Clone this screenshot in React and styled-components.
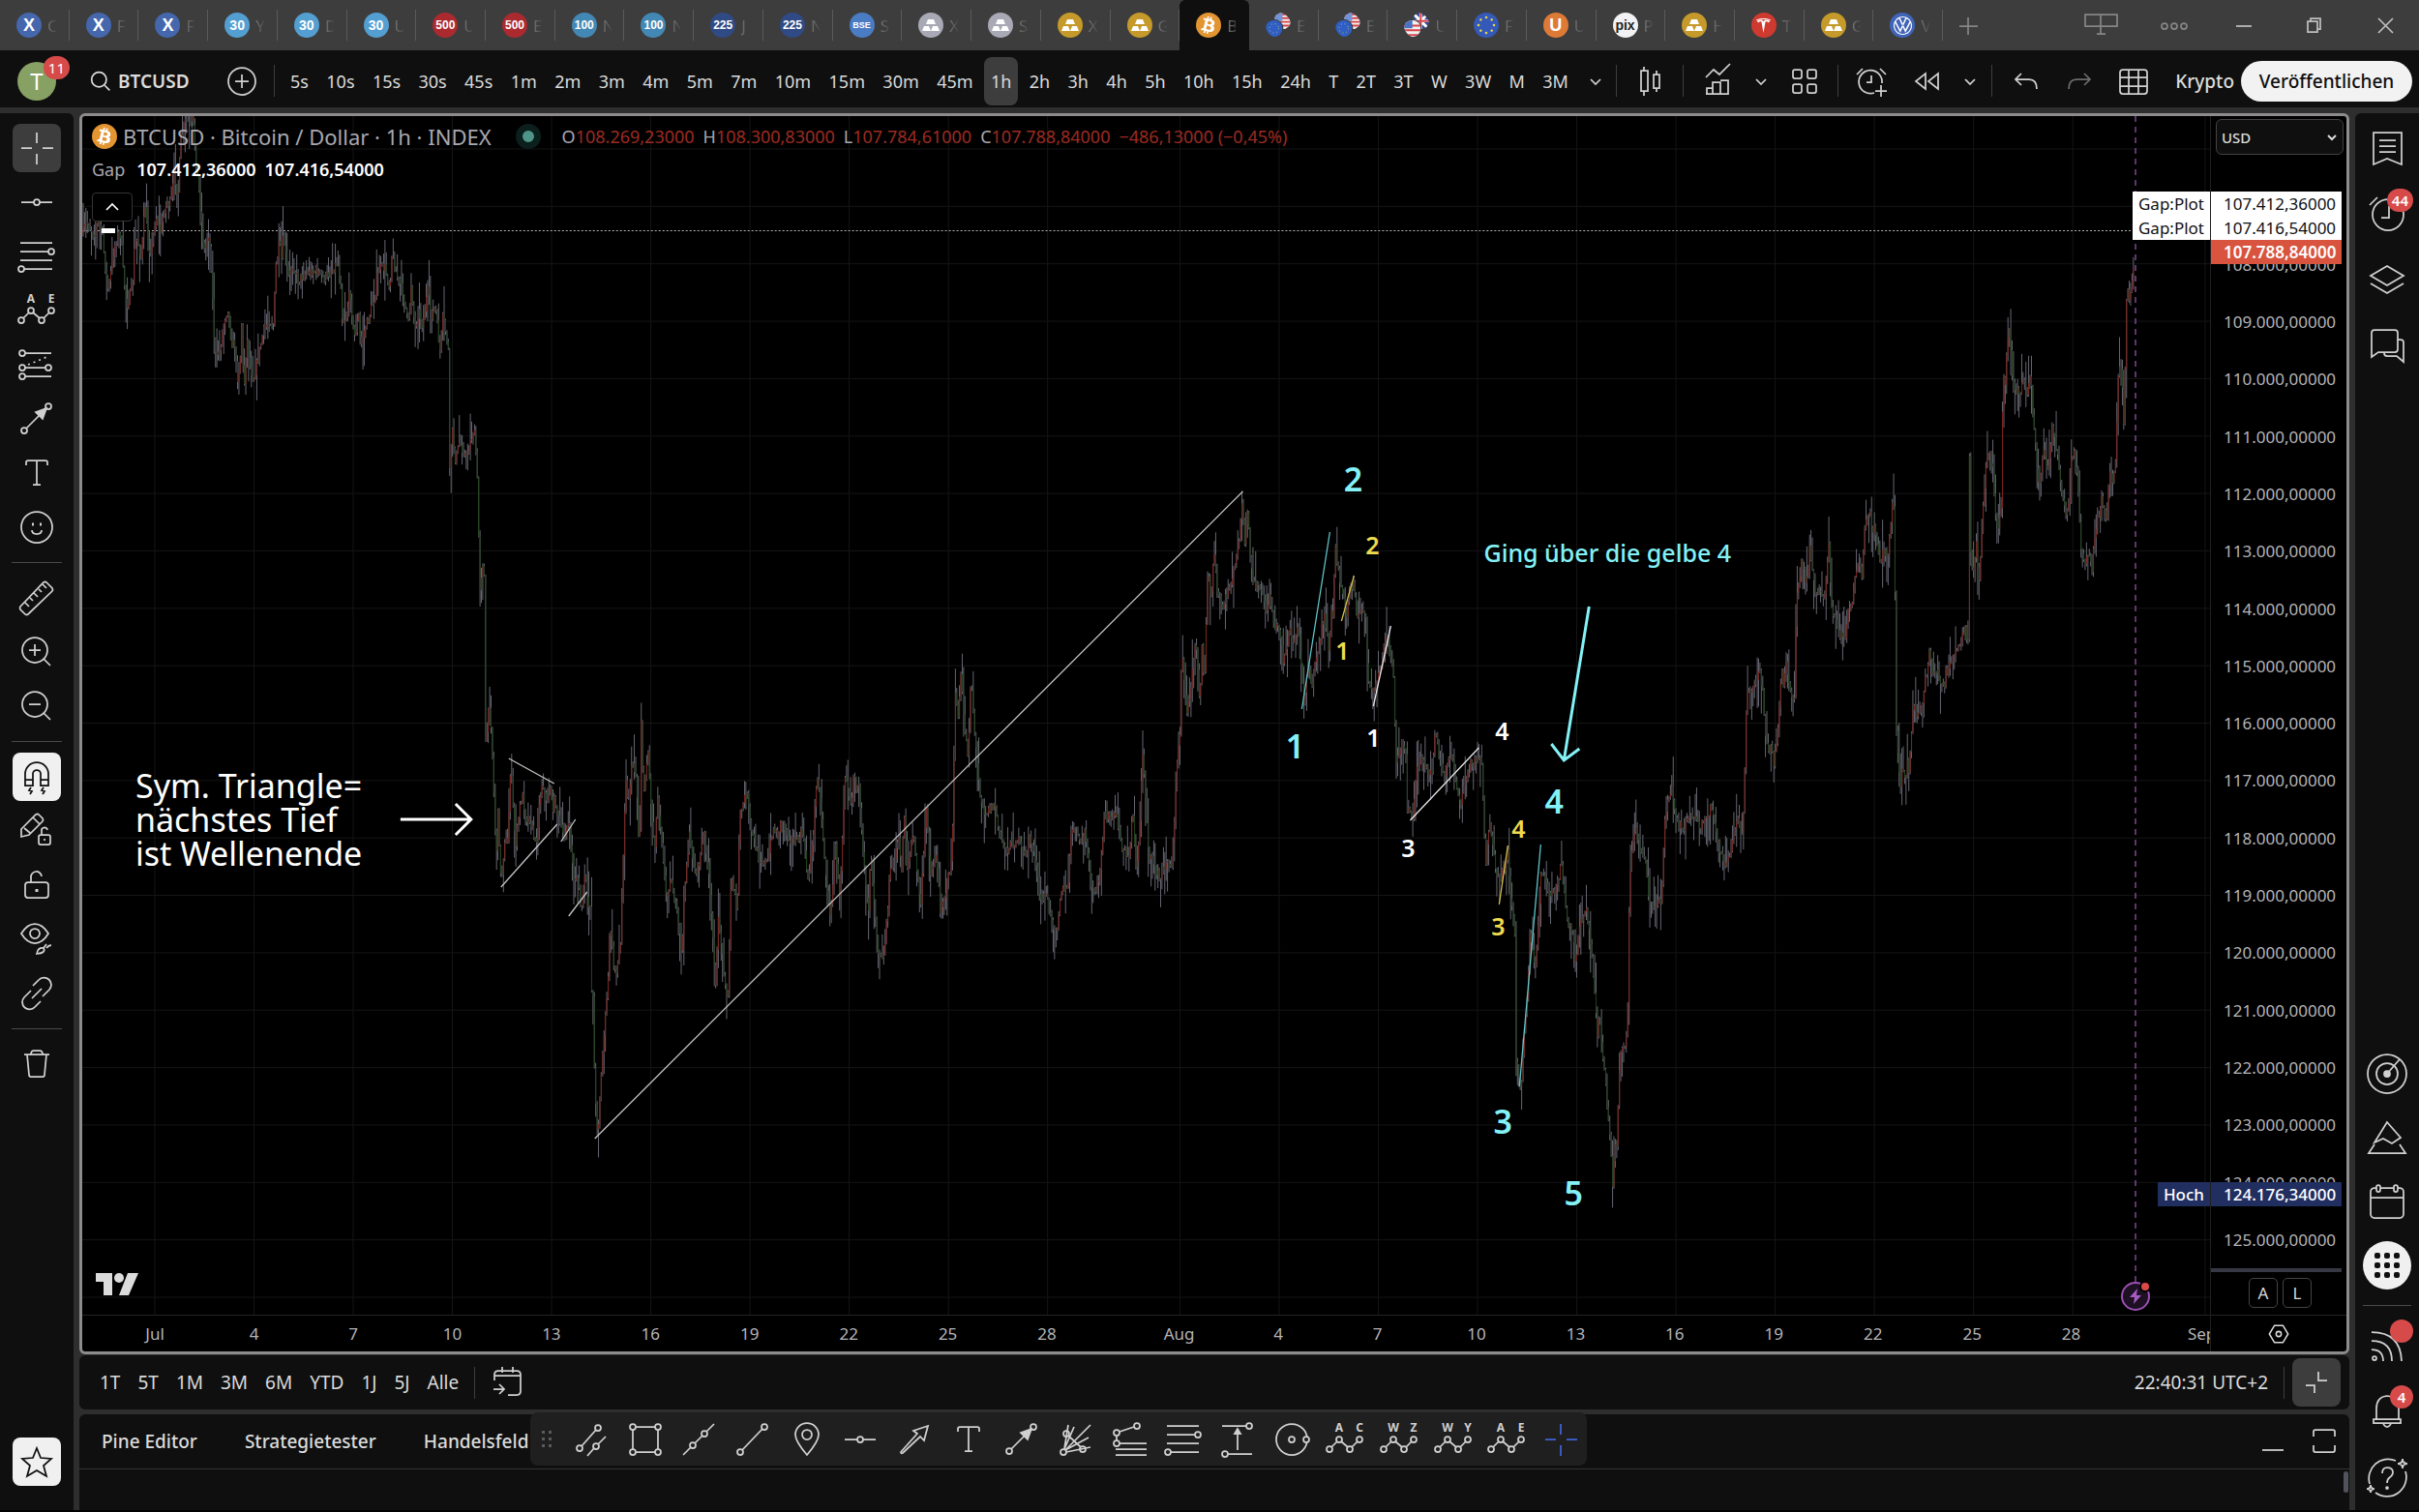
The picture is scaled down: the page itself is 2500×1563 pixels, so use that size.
import React from "react";
import styled, { createGlobalStyle, css } from "styled-components";
import { FaBtc } from "react-icons/fa";
import { SiTesla, SiVolkswagen } from "react-icons/si";

const GlobalStyle = createGlobalStyle`
  * {
    box-sizing: border-box;
  }
  body {
    margin: 0;
    background: #000;
    color: #dbdbdb;
    font-family: "Noto Sans", "Open Sans", sans-serif;
    font-size: 17px;
  }
  button, select {
    font: inherit;
    color: inherit;
    border: 0;
    padding: 0;
    background: none;
    cursor: pointer;
  }
  svg {
    display: block;
    flex-shrink: 0;
  }
`;

/* ---------- page ---------- */

const Page = styled.div`
  min-height: 100vh;
  display: flex;
  flex-direction: column;
  background: #2e2e2e;
  border-bottom: 2px solid #000;
`;

const Body = styled.div`
  flex: 1;
  display: flex;
  gap: 6px;
  margin-top: 6px;
`;

const Center = styled.main`
  flex: 1;
  min-width: 0;
  display: flex;
  flex-direction: column;
`;

/* ---------- window tabs ---------- */

const TabBar = styled.header`
  display: flex;
  height: 52px;
  background: #3d3d3d;
`;

const TabList = styled.nav`
  flex: 1;
  display: flex;
`;

const Tab = styled.button`
  flex: 1 1 0;
  min-width: 0;
  display: flex;
  align-items: center;
  gap: 6px;
  padding-left: 17px;
  position: relative;
  overflow: hidden;
  ${(p) =>
    p.$active
      ? css`
          background: #0f0f0f;
          border-radius: 6px 6px 0 0;
        `
      : css`
          &::after {
            content: "";
            position: absolute;
            right: 0;
            top: 10px;
            width: 1px;
            height: 32px;
            background: #5a5a5a;
          }
        `}
`;

const TabLetter = styled.span`
  width: 9px;
  overflow: hidden;
  text-align: left;
  color: transparent;
  background: linear-gradient(90deg, #767676, #474747);
  background-clip: text;
`;

const Coin = styled.span`
  flex: none;
  width: 26px;
  height: 26px;
  border-radius: 50%;
  display: flex;
  align-items: center;
  justify-content: center;
  overflow: hidden;
  background: ${(p) => p.$bg};
  color: ${(p) => p.$color || "#fff"};
  font-family: "Liberation Sans", sans-serif;
  font-weight: 700;
  font-size: ${(p) => p.$size || 12}px;
`;

const WindowActions = styled.div`
  width: 492px;
  display: flex;
  align-items: center;
  justify-content: flex-end;
`;

const WindowButton = styled.button`
  width: ${(p) => p.$w || 73}px;
  height: 52px;
  display: flex;
  align-items: center;
  justify-content: center;
  color: ${(p) => (p.$dim ? "#858585" : "#bdbdbd")};
`;

/* ---------- top toolbar ---------- */

const Toolbar = styled.div`
  height: 59px;
  display: flex;
  align-items: center;
  padding-top: 4px;
  background: #0f0f0f;
`;

const Avatar = styled.button`
  position: relative;
  width: 40px;
  height: 40px;
  margin-left: 18px;
  border-radius: 50%;
  background: #87a064;
  color: #fff;
  font-size: 24px;
`;

const Badge = styled.span`
  position: absolute;
  top: ${(p) => p.$top || 0}px;
  right: ${(p) => p.$right || 0}px;
  min-width: 24px;
  height: 24px;
  padding: 0 5px;
  border-radius: 12px;
  background: #d64a4a;
  color: #fff;
  font-size: 15px;
  font-weight: ${(p) => p.$weight || 600};
  line-height: 24px;
  text-align: center;
`;

const SymbolButton = styled.button`
  display: flex;
  align-items: center;
  gap: 7px;
  margin-left: 35px;
  width: 124px;
  font-size: 19px;
  font-weight: 600;
`;

const Intervals = styled.div`
  display: flex;
  align-items: center;
  justify-content: space-between;
  width: 1335px;
  margin-left: 9px;
`;

const Interval = styled.button`
  height: 50px;
  padding: 0 7px;
  border-radius: 8px;
  font-size: 18px;
  background: ${(p) => (p.$active ? "#3d3d3d" : "none")};
`;

const Rule = styled.span`
  flex: none;
  width: 1px;
  height: 33px;
  background: #3d3d3d;
`;

const Tool = styled.button`
  position: relative;
  flex: none;
  width: ${(p) => p.$w || 50}px;
  height: 50px;
  display: flex;
  align-items: center;
  justify-content: center;
  border-radius: ${(p) => (p.$round ? 25 : 8)}px;
  color: ${(p) => (p.$solid ? "#0f0f0f" : p.$dim ? "#6b6b6b" : p.$blue ? "#3f63d8" : "#d0d0d0")};
  background: ${(p) => (p.$solid ? "#f0f0f0" : p.$active ? "#3d3d3d" : "none")};
`;

const ToolbarEnd = styled.div`
  flex: 1;
  display: flex;
  align-items: center;
  justify-content: flex-end;
  padding-right: 7px;
`;

const LayoutName = styled.button`
  margin: 0 7px 0 16px;
  font-size: 19px;
  font-weight: 500;
`;

const Publish = styled.button`
  height: 42px;
  width: 177px;
  border-radius: 21px;
  background: #f2f2f2;
  color: #0f0f0f;
  font-size: 19px;
  font-weight: 500;
`;

/* ---------- side bars ---------- */

const LeftBar = styled.aside`
  width: 76px;
  display: flex;
  flex-direction: column;
  align-items: center;
  gap: 6px;
  padding: 11px 0 25px;
  border-radius: 0 6px 0 0;
  background: #0f0f0f;
`;

const Divider = styled.hr`
  width: 52px;
  height: 1px;
  margin: 5px 0;
  border: 0;
  background: #4a4a4a;
`;

const Push = styled.div`
  flex: 1;
`;

const RightBar = styled.aside`
  width: 66px;
  display: flex;
  flex-direction: column;
  align-items: center;
  gap: 16px;
  padding: 11px 0 9px;
  border-radius: 6px 0 0 0;
  background: #0f0f0f;

  ${Divider} {
    width: 50px;
    margin: 0;
  }
`;

const ToolGroup = styled.div`
  display: flex;
  flex-direction: column;
  gap: 18px;
`;

/* ---------- chart ---------- */

const Frame = styled.section`
  flex: 1;
  display: flex;
  flex-direction: column;
  border: 3px solid #8d8b8c;
  border-radius: 6px;
  background: #000;
  overflow: hidden;
`;

const PlotRow = styled.div`
  flex: 1;
  display: flex;
  position: relative;
`;

const Plot = styled.div`
  flex: 1;
  position: relative;
  overflow: hidden;
`;

const Drawing = styled.svg`
  position: absolute;
  inset: 0;
  width: 100%;
  height: 100%;
`;

const Note = styled.div`
  position: absolute;
  left: ${(p) => p.$x}%;
  top: ${(p) => p.$y}%;
  transform: translate(${(p) => (p.$left ? "0" : "-50%")}, -50%);
  color: ${(p) => p.$color};
  font-size: ${(p) => p.$size}px;
  font-weight: ${(p) => p.$weight || 600};
  line-height: 35px;
  white-space: pre;
`;

const Legend = styled.div`
  position: absolute;
  left: 10px;
  top: 6px;
  display: flex;
  flex-direction: column;
  align-items: flex-start;
  color: #a8a8b0;
  white-space: nowrap;
`;

const LegendRow = styled.div`
  display: flex;
  align-items: center;
  height: ${(p) => p.$h}px;
  font-size: 18px;
`;

const LegendTitle = styled.span`
  margin-left: 6px;
  font-size: 22px;
`;

const StatusDot = styled.span`
  width: 26px;
  height: 26px;
  margin: 0 22px 0 25px;
  border: 7px solid #0b1f1c;
  border-radius: 50%;
  background: #4f9488;
`;

const Ohlc = styled.span`
  margin-right: 9px;
  em {
    font-style: normal;
    color: #9c2b22;
  }
`;

const GapValue = styled.strong`
  margin-left: ${(p) => p.$gap}px;
  color: #fff;
  font-weight: 600;
`;

const Collapse = styled.button`
  width: 42px;
  height: 30px;
  margin-top: 5px;
  border: 1px solid #333;
  border-radius: 4px;
  background: #000;
  display: flex;
  align-items: center;
  justify-content: center;
  color: #fff;
`;

const LogoMark = styled.svg`
  position: absolute;
  left: 13px;
  bottom: 19px;
`;

const EventDot = styled.div`
  position: absolute;
  left: 96.5%;
  bottom: 3px;
  transform: translateX(-50%);
`;

const PriceAxis = styled.div`
  width: 141px;
  display: flex;
  flex-direction: column;
  border-left: 1px solid #202020;
  color: #b4b4b8;
`;

const AxisHead = styled.div`
  flex: 120 1 0;
  padding: 3px 3px 0 5px;
`;

const UnitField = styled.div`
  position: relative;
  color: #dbdbdb;
  svg {
    position: absolute;
    right: 7px;
    top: 15px;
    pointer-events: none;
  }
`;

const UnitSelect = styled.select`
  appearance: none;
  width: 100%;
  height: 37px;
  padding-left: 5px;
  border: 1px solid #434343;
  border-radius: 6px;
  background: #0f0f0f;
  font-size: 15px;
  font-weight: 500;
`;

const PriceLabel = styled.div`
  flex: 59 1 0;
  display: flex;
  align-items: center;
  padding-left: 13px;
`;

const AxisFoot = styled.div`
  height: 48px;
  margin-right: 5px;
  border-top: 4px solid #363843;
  display: flex;
  align-items: center;
  justify-content: center;
  gap: 5px;
  padding-left: 8px;
`;

const ScaleButton = styled.button`
  width: 30px;
  height: 31px;
  border: 1px solid #444;
  border-radius: 5px;
  color: #dbdbdb;
`;

const Tags = styled.div`
  position: absolute;
  right: 5px;
  top: ${(p) => p.$y}%;
  display: flex;
  flex-direction: column;
  align-items: flex-end;
`;

const Tag = styled.div`
  display: flex;
  gap: 1px;
  height: 25px;
  line-height: 25px;
  font-weight: ${(p) => p.$weight || 400};
  color: ${(p) => p.$color};
  span {
    padding: 0 6px;
    background: ${(p) => p.$bg};
  }
  b {
    width: 135px;
    padding-left: 13px;
    font-weight: inherit;
    background: ${(p) => p.$bg};
  }
`;

const TimeRow = styled.div`
  height: 38px;
  display: flex;
  border-top: 1px solid #232323;
`;

const TimeAxis = styled.div`
  flex: 1;
  min-width: 0;
  display: flex;
  overflow: hidden;
  color: #b4b4b8;
`;

const TimeLabel = styled.div`
  flex: ${(p) => p.$days} 1 0;
  min-width: 0;
  line-height: 38px;
  text-align: ${(p) => (p.$cut ? "left" : "center")};
  text-indent: ${(p) => (p.$cut ? 35 : 0)}px;
`;

const AxisSettings = styled.button`
  width: 141px;
  border-left: 1px solid #202020;
  display: flex;
  align-items: center;
  justify-content: center;
`;

/* ---------- below the chart ---------- */

const RangeBar = styled.div`
  height: 56px;
  margin-top: 1px;
  display: flex;
  align-items: center;
  padding: 0 9px 0 12px;
  border-radius: 6px;
  background: #0f0f0f;
  font-size: 19px;
`;

const RangeList = styled.div`
  display: flex;
  padding-right: 7px;
`;

const RangeButton = styled.button`
  padding: 0 9px;
  height: 40px;
`;

const Clock = styled.button`
  margin: 0 16px 0 auto;
`;

const ShrinkSlot = styled.div`
  margin-left: 8px;
`;

const Panel = styled.section`
  position: relative;
  height: 99px;
  margin-top: 5px;
  border-radius: 6px 6px 0 0;
  background: #0f0f0f;
`;

const PanelTabs = styled.div`
  height: 57px;
  display: flex;
  align-items: center;
  gap: 49px;
  padding: 0 1px 0 23px;
  border-bottom: 1px solid #333;
`;

const PanelTab = styled.button`
  font-size: 19px;
  font-weight: 500;
`;

const PanelActions = styled.div`
  margin-left: auto;
  display: flex;
`;

const ScrollThumb = styled.div`
  width: 5px;
  height: 22px;
  margin: 2px 1px 0 auto;
  border-radius: 3px;
  background: #50535e;
`;

const FloatingBar = styled.div`
  position: absolute;
  left: 466px;
  top: -2px;
  width: 1092px;
  height: 55px;
  display: flex;
  align-items: center;
  padding: 0 2px 0 9px;
  border-radius: 8px;
  background: #1f1f1f;
`;

const FloatingTools = styled.div`
  flex: 1;
  display: flex;
  justify-content: space-between;
  margin-left: 13px;
`;

/* ---------- icons ---------- */

const dot = (x, y, r = 3) => <circle cx={x} cy={y} r={r} />;

const wave = (a, b) => (
  <>
    {dot(9, 35)}
    {dot(19, 25)}
    {dot(30, 35)}
    {dot(40, 25)}
    <path d="M11 33l6-6M21 27l7 6M32 33l6-6" />
    <g fill="currentColor" stroke="none" fontSize="12" fontWeight="700" textAnchor="middle">
      <text x="19" y="17">{a}</text>
      <text x="40" y="17">{b}</text>
    </g>
  </>
);

const icons = {
  cross: <path d="M25 9v11M25 31v11M9 25h11M31 25h11" />,
  hline: <>{dot(25, 25)}<path d="M9 25h13M28 25h13" /></>,
  fib: <>{dot(40, 20)}{dot(9, 38)}<path d="M8 11h33M8 20h29M8 29h33M12 38h29" /></>,
  abcde: wave("A", "E"),
  abc: wave("A", "C"),
  wxyxz: wave("W", "Z"),
  wxy: wave("W", "Y"),
  position: (
    <>
      {dot(10, 13)}{dot(10, 28)}{dot(37, 28)}{dot(10, 37)}
      <path d="M13 13h27M13 28h21M13 37h27" />
      <path d="M16 25l22-9" strokeDasharray="2 4" />
    </>
  ),
  arrow: <>{dot(12, 37)}{dot(37, 12)}<path d="M14 35L30 19" /><path d="M35 14L24 18l7 7z" fill="currentColor" /></>,
  text: <path d="M14 17v-3q0-2 2-2h18q2 0 2 2v3M25 12v25M21 37h8" />,
  smile: (
    <>
      {dot(25, 25, 16)}
      <path d="M20 28q0 4 5 4t5-4" />
      <path d="M20 22h2M28 22h2" strokeWidth="3" />
    </>
  ),
  ruler: <path d="M8 34L32 9q2-1 3 0l6 6q1 2 0 3L16 42q-2 1-3 0l-5-5q-1-2 0-3zM13 30l4 4M18 25l3 3M22 20l4 4M27 16l3 3M31 11l4 4" />,
  zoomIn: <>{dot(23, 23, 13)}<path d="M32 32l7 7M17 23h12M23 17v12" /></>,
  zoomOut: <>{dot(23, 23, 13)}<path d="M32 32l7 7M17 23h12" /></>,
  magnet: <path d="M13 34V22a12 12 0 0 1 24 0v12h-8V22a4 4 0 0 0-8 0v12zM13 28h8M29 28h8M19 36l-2 3 3 1-2 3M32 36l-2 3 3 1-2 3" />,
  pencilLock: (
    <>
      <path d="M9 23L24 8q2-1 3 0l4 4q1 2 0 3L17 29l-8 2zM21 11l7 7M12 22l6 5" />
      <rect x="27" y="29" width="12" height="10" rx="2" />
      <path d="M30 29v-4a3 3 0 0 1 6-1M33 33v2" />
    </>
  ),
  lock: <><rect x="13" y="22" width="24" height="16" rx="3" /><path d="M19 22v-5a5 5 0 0 1 11-1" /><path d="M25 29v3" strokeWidth="3" /></>,
  eye: (
    <>
      <path d="M9 19q6-10 14-10t14 10q-6 10-14 10T9 19z" />
      {dot(23, 19, 5)}
      <path d="M25 40q1-7 7-6 3 5-7 6zM32 34l3-4M35 34q2-3 5-3" />
    </>
  ),
  link: <path d="M21 17l6-6a7 7 0 0 1 11 10l-7 7M29 33l-6 6a7 7 0 0 1-11-10l7-7M20 30l10-10" />,
  trash: <path d="M12 15h26M15 15l2 21q0 2 2 2h12q2 0 2-2l2-21M19 15q0-4 3-4h6q3 0 3 4" />,
  star: <path d="M25 11l4 10 11 1-8 7 3 11-10-6-10 6 3-11-8-7 11-1z" />,
  parallel: <>{dot(32, 13)}{dot(13, 34)}{dot(30, 32)}<path d="M15 32l15-17M21 42l7-8M32 30l8-8" /></>,
  rect: <>{dot(12, 12)}{dot(38, 12)}{dot(12, 38)}{dot(38, 38)}<path d="M15 12h20M15 38h20M12 15v20M38 15v20" /></>,
  extended: <>{dot(19, 31)}{dot(31, 19)}<path d="M9 41l8-8M21 29l8-8M33 17l8-8" /></>,
  line: <>{dot(12, 38)}{dot(37, 12)}<path d="M14 36L35 14" /></>,
  pin: <><path d="M25 41Q13 27 13 20a12 12 0 0 1 24 0q0 7-12 21z" />{dot(25, 20, 5)}</>,
  marker: <path d="M39 11l-15 5 4 3-17 19q0 2 2 1l18-17 4 4z" />,
  fan: (
    <>
      {dot(12, 38)}{dot(15, 19)}{dot(32, 35)}
      <path d="M13 35l4-25M13 35l10-23M14 36l26-26M14 36l24-13M15 38l25-5M17 21l13 12" />
    </>
  ),
  wedge: <>{dot(32, 11)}{dot(11, 18)}{dot(11, 29)}<path d="M14 17l15-5M11 21v5M14 29h28M10 35h32M10 41h32" /></>,
  range: (
    <>
      {dot(37, 11)}{dot(12, 40)}
      <path d="M9 11h25M15 40h25M25 16v20" />
      <path d="M25 14l-3 5h6z" fill="currentColor" />
    </>
  ),
  circle: <>{dot(25, 25, 16)}{dot(25, 25)}<circle cx="40" cy="25" r="3" fill="#1f1f1f" /></>,
  candles: <path d="M16 14h7v21h-7zM19 10v4M19 35v5M29 18h6v14h-6zM32 14v4M32 32v4" />,
  indicators: <path d="M13 21l8-8 6 5 11-11M14 38V32h6v6M20 38V26h8v12M28 38v-9M28 24h8v14H13" />,
  layouts: (
    <>
      <rect x="13" y="13" width="9" height="9" rx="2" />
      <rect x="28" y="13" width="9" height="9" rx="2" />
      <rect x="13" y="28" width="9" height="9" rx="2" />
      <rect x="28" y="28" width="9" height="9" rx="2" />
    </>
  ),
  alarmAdd: <path d="M36 27a12 12 0 1 0-8 10M25 19v7h-5M10 18l6-6M40 18l-6-6M29 35h12M35 29v12" />,
  rewind: <path d="M24 17v16l-10-8zM37 17v16l-10-8z" />,
  undo: <path d="M20 17l-6 6 6 6M14 23h14q8 0 8 10" />,
  redo: <path d="M30 17l6 6-6 6M36 23H22q-8 0-8 10" />,
  table: <><rect x="11" y="13" width="28" height="25" rx="3" /><path d="M11 21h28M11 30h28M20 13v25M30 13v25" /></>,
  plusCircle: <>{dot(25, 25, 14)}<path d="M18 25h14M25 18v14" /></>,
  search: <>{dot(23, 23, 9)}<path d="M30 30l6 6" /></>,
  chevron: <path d="M20 23l5 5 5-5" />,
  up: <path d="M19 28l6-6 6 6" />,
  list: <path d="M11 9h29v33l-15-6-14 6zM17 17h17M17 23h17M17 29h17" />,
  alarm: <>{dot(26, 26, 16)}<path d="M19 29h8V17M7 16l8-8" /></>,
  layers: <path d="M8 21l17-10 17 10-17 10zM8 29l17 10 17-10" />,
  chat: <path d="M9 37V12q0-3 3-3h21q3 0 3 3v17q0 3-3 3H16zM36 19h3q3 0 3 3v20l-7-6H25q-3 0-3-3v-1" />,
  radar: <>{dot(25, 25, 20)}{dot(25, 25, 11)}<circle cx="25" cy="25" r="3" fill="currentColor" /><path d="M25 25L38 10" /></>,
  peak: <path d="M25 9l14 16-9 6-9-5-9 4zM12 32l-6 9h38l-6-9" />,
  calendar: (
    <>
      <rect x="8" y="11" width="34" height="31" rx="4" />
      <path d="M8 21h34" />
      <rect x="14" y="8" width="4" height="7" rx="2" fill="#0f0f0f" />
      <rect x="32" y="8" width="4" height="7" rx="2" fill="#0f0f0f" />
    </>
  ),
  apps: (
    <g fill="currentColor" stroke="none">
      {[12, 22, 32].map((y) => [12, 22, 32].map((x) => <rect key={x + "-" + y} x={x} y={y} width="6" height="6" rx="2" />))}
    </g>
  ),
  feed: <>{dot(12, 38, 2)}<path d="M9 29q12 0 12 12M9 20q21 0 21 21M9 11q30 0 31 30" /></>,
  bell: <path d="M14 33V22q0-12 11-13 12 1 12 13v11M11 33h28v4H11zM21 38q4 6 8 0" />,
  help: (
    <>
      <path d="M34 8A20 20 0 0 0 7 32M13 41A20 20 0 0 0 44 19" />
      <path d="M20 21q0-6 5-6 6 0 6 5 0 3-3 5t-3 6" />
      {dot(25, 36, 1)}
      <path d="M41 6q0 5 5 5-5 0-5 5 0-5-5-5 5 0 5-5zM8 33q0 4 4 4-4 0-4 4 0-4-4-4 4 0 4-4z" />
    </>
  ),
  goto: <path d="M11 23V17q0-4 4-4h19q4 0 4 4v17q0 4-4 4h-9M11 18h27M19 9v6M30 9v6M10 32h11M16 27l5 5-5 5" />,
  shrink: <path d="M27 14v9h9M14 28h9v8" />,
  minus: <path d="M14 34h22" />,
  maximize: <path d="M14 20v-5q0-2 2-2h18q2 0 2 2v5M14 29v5q0 2 2 2h18q2 0 2-2v-5" />,
  hex: <path d="M20 15h10l6 10-6 10H20l-6-10zM22 25a3 3 0 1 0 6 0 3 3 0 1 0-6 0" />,
  monitor: <path d="M9 14h33v12H9zM25 14v20M21 34h9" />,
  more: <>{dot(15, 26)}{dot(25, 26)}{dot(35, 26)}</>,
  plus: <path d="M16 26h19M25 17v18" />,
  minimize: <path d="M17 26h16" />,
  restore: <path d="M18 21h10v11H18zM21 21v-3h10v11h-3" />,
  close: <path d="M17 18l15 15M32 18L17 33" />,
};

const Icon = ({ name, size = 50, stroke = 1.75 }) => (
  <svg
    width={size}
    height={size}
    viewBox="0 0 50 50"
    fill="none"
    stroke="currentColor"
    strokeWidth={stroke}
    aria-hidden="true"
  >
    {icons[name]}
  </svg>
);

const Ingots = () => (
  <svg width="26" height="26" viewBox="0 0 26 26" fill="#fff">
    <path d="M10 7h6l2 5H8zM6 14h5l2 5H4zM15 14h5l2 5h-9z" />
  </svg>
);

const Bitcoin = () => (
  <svg width="26" height="26" viewBox="0 0 26 26">
    <g transform="rotate(14 13 13) translate(4 4)">
      <FaBtc size={18} />
    </g>
  </svg>
);

const EuStars = () => (
  <svg width="26" height="26" viewBox="0 0 26 26" fill="#e8d34a">
    {[0, 45, 90, 135, 180, 225, 270, 315].map((a) => (
      <circle key={a} cx="13" cy="5" r="1.300" transform={`rotate(${a} 13 13)`} />
    ))}
  </svg>
);

const FlagPair = ({ back, front }) => (
  <svg width="26" height="26" viewBox="0 0 27 27">
    <defs>
      <clipPath id="flagBack"><circle cx="18" cy="9" r="9" /></clipPath>
      <clipPath id="flagFront"><circle cx="9" cy="17" r="9" /></clipPath>
    </defs>
    <g clipPath="url(#flagBack)">
      {back === "us" ? (
        <>
          <path d="M9 0h18v18H9z" fill="#f0f0f0" />
          <path d="M9 2h18M9 6h18M9 10h18M9 14h18" stroke="#d8434a" strokeWidth="2" />
          <path d="M9 0h9v9H9z" fill="#6f94d8" />
        </>
      ) : (
        <>
          <path d="M9 0h18v18H9z" fill="#2f4a9c" />
          <path d="M9 0l18 18M27 0L9 18M18 0v18M9 9h18" stroke="#fff" strokeWidth="3" />
          <path d="M18 0v18M9 9h18" stroke="#d8434a" strokeWidth="2" />
        </>
      )}
    </g>
    <circle cx="9" cy="17" r="10" fill="#3d3d3d" />
    <g clipPath="url(#flagFront)">
      {front === "eu" ? (
        <>
          <path d="M0 8h18v18H0z" fill="#2f5fc4" />
          <circle cx="9" cy="17" r="5" fill="none" stroke="#c9c86a" strokeWidth="1" strokeDasharray="1 3" />
        </>
      ) : (
        <>
          <path d="M0 8h18v18H0z" fill="#f0f0f0" />
          <path d="M0 14h18M0 19h18M0 24h18" stroke="#d8434a" strokeWidth="2" />
          <path d="M0 8h9v9H0z" fill="#4a72c4" />
        </>
      )}
    </g>
  </svg>
);

/* ---------- data ---------- */

const gold = { bg: "#c59a2b", mark: <Ingots /> };
const silver = { bg: "#a9a9b5", mark: <Ingots /> };
const x = { bg: "#4467ad", mark: "X", size: 18 };
const dow = { bg: "#549fd2", mark: "30", size: 14 };
const spx = { bg: "#ab2a30", mark: "500" };
const ndx = { bg: "#4388b4", mark: "100" };
const nikkei = { bg: "#2f4a84", mark: "225" };
const eurusd = { mark: <FlagPair back="us" front="eu" /> };

const tabs = [
  ["C", x],
  ["F", x],
  ["F", x],
  ["Y", dow],
  ["D", dow],
  ["U", dow],
  ["U", spx],
  ["E", spx],
  ["N", ndx],
  ["N", ndx],
  ["J", nikkei],
  ["N", nikkei],
  ["S", { bg: "#4a7cc4", mark: "BSE", size: 9 }],
  ["X", silver],
  ["S", silver],
  ["X", gold],
  ["G", gold],
  ["B", { bg: "#e39532", mark: <Bitcoin /> }],
  ["E", eurusd],
  ["E", eurusd],
  ["U", { mark: <FlagPair back="uk" front="us" /> }],
  ["F", { bg: "#3459b8", mark: <EuStars /> }],
  ["U", { bg: "#dd7a35", mark: "U", size: 18 }],
  ["P", { bg: "#f2f2f4", mark: "pix", color: "#222", size: 14 }],
  ["H", gold],
  ["T", { bg: "#cf3a30", mark: <SiTesla size={15} /> }],
  ["G", gold],
  ["V", { bg: "#4064b8", mark: <SiVolkswagen size={19} /> }],
];

const intervals =
  "5s 10s 15s 30s 45s 1m 2m 3m 4m 5m 7m 10m 15m 30m 45m 1h 2h 3h 4h 5h 10h 15h 24h T 2T 3T W 3W M 3M".split(" ");

const drawTools = [
  ["cross", "Fadenkreuz"],
  ["hline", "Horizontale Linie"],
  ["fib", "Fib-Retracement"],
  ["abcde", "Elliott-Dreieck"],
  ["position", "Long-Position"],
  ["arrow", "Pfeil"],
  ["text", "Text"],
  ["smile", "Emoji"],
  null,
  ["ruler", "Messen"],
  ["zoomIn", "Vergrößern"],
  ["zoomOut", "Verkleinern"],
  null,
  ["magnet", "Magnetmodus"],
  ["pencilLock", "Zeichenmodus"],
  ["lock", "Sperren"],
  ["eye", "Ausblenden"],
  ["link", "Synchronisieren"],
  null,
  ["trash", "Löschen"],
];

const favorites = [
  "parallel", "rect", "extended", "line", "pin", "hline", "marker", "text", "arrow", "fan",
  "wedge", "fib", "range", "circle", "abc", "wxyxz", "wxy", "abcde", "cross",
];

const ranges = ["1T", "5T", "1M", "3M", "6M", "YTD", "1J", "5J", "Alle"];

// [label, width in tenths of a day]
const timeLabels = [
  ["", 7],
  ["Jul", 30], ["4", 30], ["7", 30], ["10", 30], ["13", 30],
  ["16", 30], ["19", 30], ["22", 30], ["25", 30], ["28", 30],
  ["", 10],
  ["Aug", 30], ["4", 30], ["7", 30], ["10", 30], ["13", 30],
  ["16", 30], ["19", 30], ["22", 30], ["25", 30], ["28", 30],
  ["", 10],
];

const prices = Array.from({ length: 18 }, (_, i) => `${108 + i}.000,00000`);

// Course of the hourly closes in plot units (x, y pairs)
const course = `
85 243 89 230 97 241 102 230 106 240 108 270 112 301 117 263 121 243 125 242 127 277 131 316 137 297 139 253 142 247
146 267 150 210 153 257 157 257 161 223 166 240 171 210 177 210 180 177 184 203 187 143 192 123 197 130 199 120 203 170
207 213 211 260 216 240 219 283 221 343 223 370 227 363 232 330 236 317 239 353 243 357 245 393 248 377 250 330 252 410
255 347 258 377 262 392 267 370 272 343 278 330 283 337 285 277 289 250 291 270 293 243 298 287 303 273 308 290 315 283
323 280 328 280 335 288 343 280 349 270 353 297 354 333 358 327 362 300 366 350 371 327 373 360 376 343 380 333 387 307
392 277 398 277 403 297 405 263 411 287 417 303 422 337 425 293 429 340 433 320 437 337 442 300 446 327 450 317 455 363
458 327 462 350 464 367 465 497 467 440 471 477 475 457 482 473 490 443 493 480 495 560 496 610 499 580 501 601 502 774
506 723 508 752 510 805 513 886 515 837 518 915 522 866 525 874 528 786 531 846 533 874 537 837 540 821 544 846 548 846
554 874 558 829 561 805 565 833 569 811 571 837 574 825 578 850 583 866 587 850 590 866 593 911 597 903 601 944 605 899
608 940 611 931 612 1070 613 1021 615 1131 618 1172 624 1073 628 1027 631 951 634 997 637 1004 642 974 644 893 647 798
649 832 654 786 658 805 661 886 663 740 665 824 670 775 674 847 677 874 680 824 684 863 689 932 693 905 699 939 705 985
708 912 713 863 718 901 722 897 728 859 732 897 735 939 740 1016 743 947 748 1000 753 1035 756 897 762 947 765 844
772 817 776 855 784 886 794 893 799 855 804 863 808 847 817 867 824 870 830 859 835 909 840 874 845 798 848 824 853 893
858 951 864 870 868 932 874 794 880 832 883 794 886 824 887 798 892 882 898 939 900 878 904 932 908 981 914 989 920 905
929 867 932 901 935 840 938 897 944 863 952 935 958 832 962 905 968 882 972 939 978 920 984 889 986 805 988 710 991 748
993 694 997 748 1001 782 1004 694 1008 763 1013 817 1018 840 1029 832 1033 863 1041 878 1052 867 1059 886 1065 867
1070 882 1076 935 1081 920 1087 954 1093 958 1097 920 1104 920 1107 867 1112 851 1116 874 1122 859 1127 905 1132 928
1138 897 1142 836 1147 847 1154 844 1160 874 1167 889 1171 836 1175 905 1179 847 1181 770 1184 817 1188 886 1194 893
1199 912 1207 886 1211 905 1215 832 1217 782 1220 756 1222 664 1227 740 1233 694 1236 660 1241 733 1242 645 1245 713
1247 648 1249 587 1252 625 1255 568 1258 610 1264 629 1271 606 1276 591 1280 568 1284 522 1287 560 1290 530 1293 583
1296 602 1304 610 1308 633 1313 618 1318 648 1323 648 1327 683 1334 652 1337 667 1341 648 1346 687 1348 729 1352 684
1356 710 1364 664 1370 633 1374 679 1377 623 1379 644 1380 557 1384 593 1389 618 1392 639 1395 613 1400 600 1403 639
1408 633 1413 633 1414 705 1420 720 1424 700 1429 684 1434 656 1438 679 1441 700 1443 787 1446 776 1450 766 1454 787
1455 838 1461 843 1464 797 1470 787 1475 797 1480 802 1484 756 1489 787 1493 802 1501 776 1504 797 1510 838 1513 812
1520 792 1528 781 1532 787 1536 894 1540 853 1544 883 1550 914 1556 894 1559 876 1562 934 1566 945 1567 1093 1571 1118
1573 1118 1576 1072 1580 1011 1582 965 1587 1001 1591 950 1593 904 1597 909 1601 924 1607 924 1614 894 1617 919
1621 960 1625 960 1629 991 1634 955 1640 934 1644 970 1648 1011 1652 1072 1654 1037 1656 1082 1660 1123 1662 1149
1665 1174 1667 1230 1670 1184 1672 1179 1674 1113 1676 1082 1681 1077 1683 1037 1685 909 1688 868 1692 858 1696 878
1701 889 1705 929 1711 940 1718 929 1721 848 1724 827 1729 817 1734 848 1740 858 1748 838 1757 855 1766 848 1769 832
1777 873 1783 894 1789 883 1796 848 1802 863 1804 800 1806 717 1810 713 1816 698 1820 698 1822 709 1825 755 1828 782
1832 770 1834 790 1837 767 1839 740 1842 686 1844 709 1847 686 1851 717 1856 728 1857 625 1860 602 1863 579 1867 602
1871 568 1875 602 1878 614 1883 617 1887 614 1891 556 1893 625 1897 640 1902 659 1905 656 1908 663 1910 633 1915 625
1919 594 1923 579 1925 602 1928 548 1933 526 1936 548 1940 548 1943 583 1947 571 1952 575 1955 537 1957 510 1959 548
1960 740 1962 778 1965 815 1967 786 1970 805 1972 786 1974 797 1978 728 1982 744 1987 728 1990 709 1995 675 1998 694
2005 698 2010 713 2012 694 2017 686 2023 675 2032 652 2035 667 2036 445 2037 564 2040 602 2043 556 2046 602 2049 556
2052 499 2056 464 2060 480 2063 526 2066 545 2069 526 2071 384 2073 403 2077 330 2080 384 2083 403 2088 407 2093 392
2096 407 2099 384 2103 441 2108 506 2113 468 2117 487 2122 438 2127 468 2131 503 2136 533 2140 518 2141 480 2144 468
2148 487 2151 564 2155 583 2160 571 2163 587 2167 545 2173 514 2178 545 2181 487 2185 495 2188 464 2190 384 2193 380
2195 403 2196 441 2198 346 2199 288 2202 319 2204 288 2207 265`
  .trim()
  .split(/\s+/)
  .map(Number);

const buildCandles = () => {
  let seed = 7;
  const rnd = () => {
    seed = (seed * 16807) % 2147483647;
    return seed / 2147483647;
  };
  const step = 34.19 / 24;
  const out = { wick: "", up: "", down: "" };
  let k = 0;
  let open = course[1];
  for (let px = 86; px < 2207; px += step) {
    while (course[k + 2] < px) k += 2;
    const t = (px - course[k]) / (course[k + 2] - course[k]);
    const mid = course[k + 1] + (course[k + 3] - course[k + 1]) * t;
    const close = mid + (rnd() - 0.5) * 11;
    const top = Math.min(open, close);
    const bottom = Math.max(open, close);
    const at = px.toFixed(1);
    const high = top - 1 - rnd() ** 3 * 30;
    const low = bottom + 1 + rnd() ** 3 * 30;
    out.wick += `M${at} ${high.toFixed(1)}V${low.toFixed(1)}`;
    out[close < open ? "up" : "down"] += `M${at} ${top.toFixed(1)}V${bottom.toFixed(1)}`;
    open = close;
  }
  return out;
};

const candles = buildCandles();

const gridX = [
  ...Array.from({ length: 10 }, (_, i) => 160 + i * 102.57),
  ...Array.from({ length: 10 }, (_, i) => 1220 + i * 102.57),
  2280,
];
const gridY = Array.from({ length: 21 }, (_, i) => 154 + i * 59.35);

const cyan = "#83f1f6";
const yellow = "#efdb4e";

// text, x, y, color, size
const notes = [
  ["2", 1399, 495, cyan, 34],
  ["1", 1339, 771, cyan, 34],
  ["4", 1607, 828, cyan, 34],
  ["3", 1554, 1159, cyan, 34],
  ["5", 1627, 1233, cyan, 34],
  ["2", 1419, 563, yellow, 25],
  ["1", 1388, 672, yellow, 25],
  ["4", 1570, 856, yellow, 25],
  ["3", 1549, 957, yellow, 25],
  ["1", 1420, 762, "#fff", 25],
  ["4", 1553, 755, "#fff", 25],
  ["3", 1456, 876, "#fff", 25],
];

const toX = (v) => ((v - 85) / 2200) * 100;
const toY = (v) => ((v - 120) / 1239) * 100;

/* ---------- parts ---------- */

const WindowTabs = () => (
  <TabBar>
    <TabList>
      {tabs.map(([letter, coin], i) => (
        <Tab key={i} $active={i === 17}>
          <Coin $bg={coin.bg} $color={coin.color} $size={coin.size}>{coin.mark}</Coin>
          <TabLetter>{letter}</TabLetter>
        </Tab>
      ))}
    </TabList>
    <WindowActions>
      <WindowButton $w={52} $dim aria-label="Neuer Tab"><Icon name="plus" /></WindowButton>
      <Push />
      <WindowButton $dim aria-label="Bildschirm"><Icon name="monitor" /></WindowButton>
      <Rule />
      <WindowButton $w={78} $dim aria-label="Mehr"><Icon name="more" /></WindowButton>
      <WindowButton $w={66} aria-label="Minimieren"><Icon name="minimize" /></WindowButton>
      <WindowButton $w={80} aria-label="Wiederherstellen"><Icon name="restore" /></WindowButton>
      <WindowButton $w={68} aria-label="Schließen"><Icon name="close" /></WindowButton>
    </WindowActions>
  </TabBar>
);

const TopToolbar = () => (
  <Toolbar>
    <Avatar>
      T<Badge $top={-6} $right={-14} $weight={400}>11</Badge>
    </Avatar>
    <SymbolButton>
      <svg width="22" height="22" viewBox="12 12 26 26" fill="none" stroke="currentColor" strokeWidth="2">
        {icons.search}
      </svg>
      BTCUSD
    </SymbolButton>
    <Tool $w={66} aria-label="Symbol hinzufügen"><Icon name="plusCircle" /></Tool>
    <Rule />
    <Intervals>
      {intervals.map((label) => (
        <Interval key={label} $active={label === "1h"}>{label}</Interval>
      ))}
    </Intervals>
    <Tool $w={42} aria-label="Zeitintervalle"><Icon name="chevron" /></Tool>
    <Rule />
    <Tool $w={68} aria-label="Charttyp"><Icon name="candles" /></Tool>
    <Rule />
    <Tool $w={70} aria-label="Indikatoren"><Icon name="indicators" /></Tool>
    <Tool $w={20} aria-label="Favoriten"><Icon name="chevron" /></Tool>
    <Tool $w={69} aria-label="Vorlagen"><Icon name="layouts" /></Tool>
    <Rule />
    <Tool $w={68} aria-label="Alarm"><Icon name="alarmAdd" /></Tool>
    <Tool $w={46} aria-label="Replay"><Icon name="rewind" /></Tool>
    <Tool $w={44} aria-label="Replay-Optionen"><Icon name="chevron" /></Tool>
    <Rule />
    <ToolbarEnd>
      <Tool $w={55} aria-label="Rückgängig"><Icon name="undo" /></Tool>
      <Tool $w={56} $dim aria-label="Wiederholen"><Icon name="redo" /></Tool>
      <Tool $w={55} aria-label="Layout"><Icon name="table" /></Tool>
      <LayoutName>Krypto</LayoutName>
      <Publish>Veröffentlichen</Publish>
    </ToolbarEnd>
  </Toolbar>
);

const ChartDrawing = () => (
  <Drawing viewBox="85 120 2200 1239" preserveAspectRatio="none" fill="none">
    <g stroke="#151515" shapeRendering="crispEdges">
      {gridX.map((v) => <path key={v} d={`M${v} 120V1359`} />)}
      {gridY.map((v) => <path key={v} d={`M85 ${v}H2285`} />)}
    </g>
    <path d="M85 238.500H2207" stroke="#b5b5b5" strokeDasharray="2 2" />
    <g shapeRendering="crispEdges">
      <path d={candles.wick} stroke="#666672" />
      <path d={candles.down} stroke="#1f4019" />
      <path d={candles.up} stroke="#7a231b" />
    </g>
    <path d="M105 238.500h14" stroke="#fff" strokeWidth="5" />
    <g stroke="#c4c4c4" strokeWidth="1.300">
      <path d="M615 1177L1285 508M526 784l47 26M518 917l58-65M580 870l15-23M588 947l19-25" />
      <path d="M1420 730l18-83M1458 848l71-75" stroke="#e6e6e6" />
      <path d="M1346 733l29-183M1571 1123l22-250" stroke="#5fc5ca" />
      <path d="M1387 642l13-47M1550 935l9-61" stroke="#d1bf45" />
    </g>
    <path d="M414 847h73M471 831l16 16-16 16" stroke="#fff" strokeWidth="3" />
    <path d="M1643 627l-26 159M1604 769l13 17 16-12" stroke={cyan} strokeWidth="3" />
    <path d="M2208 120V1325" stroke="#9251a8" strokeWidth="1.300" strokeDasharray="6 5" />
  </Drawing>
);

const ChartLegend = () => (
  <Legend>
    <LegendRow $h={30}>
      <Coin $bg="#e39532"><Bitcoin /></Coin>
      <LegendTitle>BTCUSD · Bitcoin / Dollar · 1h · INDEX</LegendTitle>
      <StatusDot />
      <Ohlc>O<em>108.269,23000</em></Ohlc>
      <Ohlc>H<em>108.300,83000</em></Ohlc>
      <Ohlc>L<em>107.784,61000</em></Ohlc>
      <Ohlc>C<em>107.788,84000</em></Ohlc>
      <Ohlc><em>−486,13000 (−0,45%)</em></Ohlc>
    </LegendRow>
    <LegendRow $h={38}>
      Gap
      <GapValue $gap={12}>107.412,36000</GapValue>
      <GapValue $gap={9}>107.416,54000</GapValue>
    </LegendRow>
    <Collapse aria-label="Legende einklappen"><Icon name="up" /></Collapse>
  </Legend>
);

const Chart = () => (
  <Frame>
    <PlotRow>
      <Plot>
        <ChartDrawing />
        <Note $x={toX(140)} $y={toY(847)} $left $color="#fff" $size={34} $weight={400}>
          {"Sym. Triangle=\nnächstes Tief\nist Wellenende"}
        </Note>
        <Note $x={toX(1662)} $y={toY(571)} $color={cyan} $size={25} $weight={500}>
          Ging über die gelbe 4
        </Note>
        {notes.map(([text, nx, ny, color, size]) => (
          <Note key={text + nx} $x={toX(nx)} $y={toY(ny)} $color={color} $size={size}>{text}</Note>
        ))}
        <ChartLegend />
        <LogoMark width="46" height="25" viewBox="0 0 46 25" fill="#dcdcdc">
          <path d="M1 1h17v23h-9V10H1zM34 1h11L35 24H25z" />
          <circle cx="25" cy="6" r="5" />
        </LogoMark>
        <EventDot>
          <svg width="32" height="32" viewBox="0 0 32 32">
            <circle cx="16" cy="16" r="14" fill="#1d1022" stroke="#9b4fb5" strokeWidth="2" />
            <path d="M18 8l-8 9h5l-1 7 8-9h-5z" fill="#a65bc2" />
            <circle cx="26" cy="6" r="6" fill="#000" />
            <circle cx="26" cy="6" r="4" fill="#dc4a48" />
          </svg>
        </EventDot>
      </Plot>
      <PriceAxis>
        <AxisHead>
          <UnitField>
            <UnitSelect aria-label="Währung" defaultValue="USD">
              <option>USD</option>
            </UnitSelect>
            <svg width="10" height="8" viewBox="0 0 10 8" fill="none" stroke="currentColor" strokeWidth="2">
              <path d="M1 2l4 4 4-4" />
            </svg>
          </UnitField>
        </AxisHead>
        {prices.map((p) => <PriceLabel key={p}>{p}</PriceLabel>)}
        <AxisFoot>
          <ScaleButton>A</ScaleButton>
          <ScaleButton>L</ScaleButton>
        </AxisFoot>
      </PriceAxis>
      <Tags $y={toY(198)}>
        <Tag $bg="#fff" $color="#0f0f0f"><span>Gap:Plot</span><b>107.412,36000</b></Tag>
        <Tag $bg="#fff" $color="#0f0f0f"><span>Gap:Plot</span><b>107.416,54000</b></Tag>
        <Tag $bg="#d8543f" $color="#fff" $weight={600}><b>107.788,84000</b></Tag>
      </Tags>
      <Tags $y={toY(1222)}>
        <Tag $bg="#212e60" $color="#fff" $weight={500}><span>Hoch</span><b>124.176,34000</b></Tag>
      </Tags>
    </PlotRow>
    <TimeRow>
      <TimeAxis>
        {timeLabels.map(([label, days], i) => <TimeLabel key={i} $days={days}>{label}</TimeLabel>)}
        <TimeLabel $days={17} $cut>Sep</TimeLabel>
      </TimeAxis>
      <AxisSettings aria-label="Achseneinstellungen"><Icon name="hex" size={44} /></AxisSettings>
    </TimeRow>
  </Frame>
);

const BottomPanel = () => (
  <Panel>
    <PanelTabs>
      <PanelTab>Pine Editor</PanelTab>
      <PanelTab>Strategietester</PanelTab>
      <PanelTab>Handelsfeld</PanelTab>
      <PanelActions>
        <Tool $w={56} aria-label="Panel minimieren"><Icon name="minus" /></Tool>
        <Tool aria-label="Panel maximieren"><Icon name="maximize" /></Tool>
      </PanelActions>
    </PanelTabs>
    <ScrollThumb />
    <FloatingBar>
      <svg width="16" height="20" viewBox="0 0 16 20" fill="#5a5a5a">
        {[1, 8, 15].map((y) => [3, 10].map((cx) => <rect key={cx + "-" + y} x={cx} y={y} width="3" height="3" />))}
      </svg>
      <FloatingTools>
        {favorites.map((name) => (
          <Tool key={name} $blue={name === "cross"} aria-label={name}><Icon name={name} /></Tool>
        ))}
      </FloatingTools>
    </FloatingBar>
  </Panel>
);

const App = () => (
  <Page>
    <GlobalStyle />
    <WindowTabs />
    <TopToolbar />
    <Body>
      <LeftBar>
        {drawTools.map((tool, i) =>
          tool ? (
            <Tool key={i} aria-label={tool[1]} $active={i === 0} $solid={tool[0] === "magnet"}>
              <Icon name={tool[0]} />
            </Tool>
          ) : (
            <Divider key={i} />
          )
        )}
        <Push />
        <Tool $solid aria-label="Favoriten-Leiste"><Icon name="star" /></Tool>
      </LeftBar>
      <Center>
        <Chart />
        <RangeBar>
          <RangeList>
            {ranges.map((r) => <RangeButton key={r}>{r}</RangeButton>)}
          </RangeList>
          <Rule />
          <Tool $w={68} aria-label="Gehe zu"><Icon name="goto" /></Tool>
          <Clock>22:40:31 UTC+2</Clock>
          <Rule />
          <ShrinkSlot>
            <Tool $active aria-label="Chart verkleinern"><Icon name="shrink" /></Tool>
          </ShrinkSlot>
        </RangeBar>
        <BottomPanel />
      </Center>
      <RightBar>
        <ToolGroup>
          <Tool aria-label="Watchlist"><Icon name="list" /></Tool>
          <Tool aria-label="Alarme"><Icon name="alarm" /><Badge $top={-1} $right={-2}>44</Badge></Tool>
          <Tool aria-label="Objektbaum"><Icon name="layers" /></Tool>
          <Tool aria-label="Chats"><Icon name="chat" /></Tool>
        </ToolGroup>
        <Push />
        <Tool aria-label="Screener"><Icon name="radar" /></Tool>
        <Tool aria-label="Pine"><Icon name="peak" /></Tool>
        <Tool aria-label="Kalender"><Icon name="calendar" /></Tool>
        <Tool $solid $round aria-label="Produkte"><Icon name="apps" /></Tool>
        <Divider />
        <ToolGroup>
          <Tool aria-label="Streams"><Icon name="feed" /><Badge $top={-2} $right={-2} /></Tool>
          <Tool aria-label="Benachrichtigungen"><Icon name="bell" /><Badge $top={-2} $right={-2}>4</Badge></Tool>
          <Tool aria-label="Hilfe"><Icon name="help" /></Tool>
        </ToolGroup>
      </RightBar>
    </Body>
  </Page>
);

export default App;
